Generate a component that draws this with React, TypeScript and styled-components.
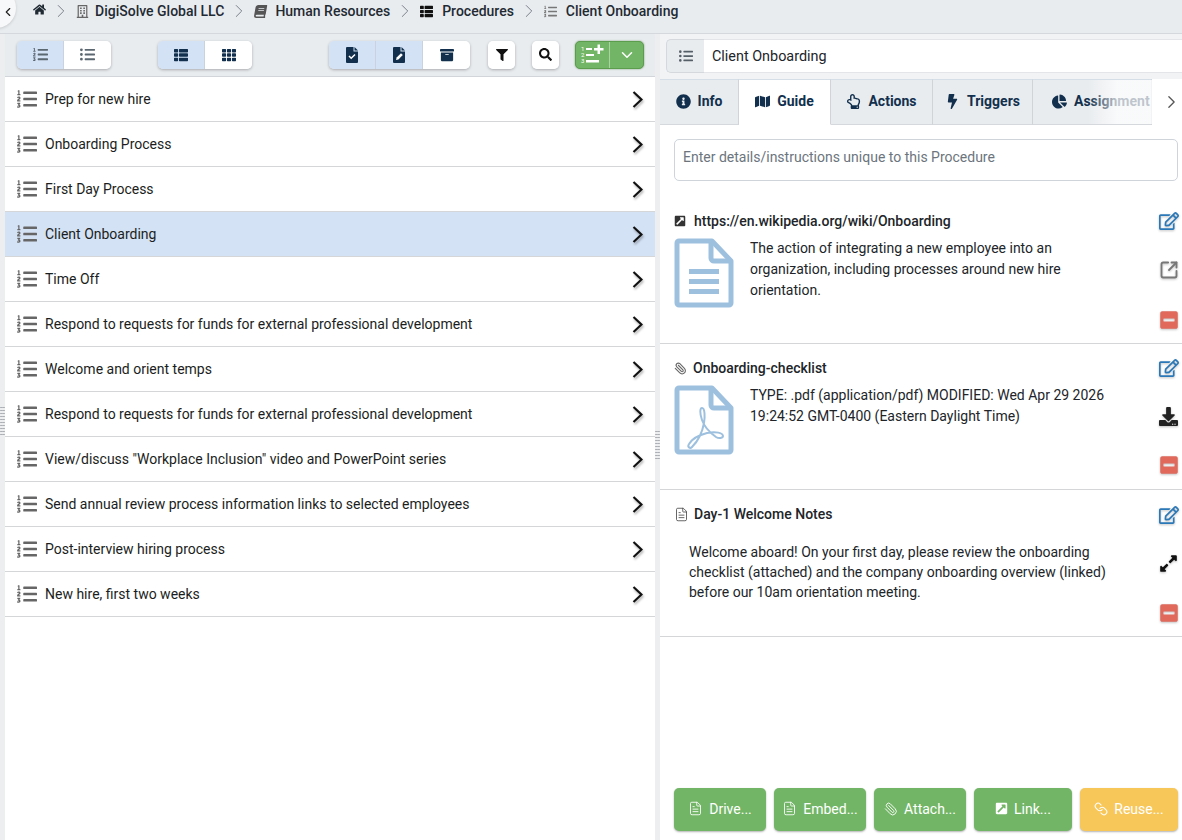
import React from 'react'
import styled, { createGlobalStyle } from 'styled-components'
import {
  FaArchive,
  FaBolt,
  FaBook,
  FaChartPie,
  FaDownload,
  FaExpandAlt,
  FaExternalLinkSquareAlt,
  FaFilter,
  FaHome,
  FaInfoCircle,
  FaListOl,
  FaListUl,
  FaMap,
  FaMinusSquare,
  FaRegBuilding,
  FaRegEdit,
  FaRegHandPointUp,
  FaSearch,
  FaTh,
  FaThList,
} from 'react-icons/fa'
import {
  ChevronDown,
  ChevronLeft,
  ChevronRight,
  FileText,
  Link as LinkIcon,
  Paperclip,
  SquareArrowOutUpRight,
} from 'lucide-react'

const GlobalStyle = createGlobalStyle`
  html, body {
    margin: 0;
    padding: 0;
    height: 100%;
    overflow: hidden;
    background: #fff;
    font-family: Roboto, "Liberation Sans", sans-serif;
    color: #212529;
  }
  * { box-sizing: border-box; }
`

const Page = styled.div`
  height: 100vh;
  display: flex;
  flex-direction: column;
`

const Breadcrumbs = styled.nav`
  position: relative;
  height: 34px;
  flex: none;
  display: flex;
  align-items: flex-start;
  padding: 3px 0 0 33px;
  background: #e9ecef;
  border-bottom: 1px solid #d5d9dd;
  font-size: 14px;
  font-weight: 500;
  line-height: 16px;
  overflow: hidden;
`

const BackButton = styled.div`
  position: absolute;
  left: -24px;
  top: -12px;
  width: 40px;
  height: 40px;
  padding: 17px 0 0 25px;
  border-radius: 50%;
  background: #f7f8f9;
  box-shadow: 0 1px 3px rgba(0, 0, 0, 0.15);
  color: #222;
  svg { display: block; width: 14px; height: 14px; }
`

const Crumb = styled.span<{ $iconGap?: number }>`
  display: inline-flex;
  align-items: center;
  gap: ${(p) => p.$iconGap ?? 8}px;
  white-space: nowrap;
  color: #1f2a33;
  svg { flex: none; font-size: 13px; }
`

const CrumbSep = styled(ChevronRight)`
  flex: none;
  width: 22px;
  height: 22px;
  margin: -3px 4px 0;
  color: #6f7780;
  stroke-width: 1;
`

const SlantedBook = styled(FaBook)`
  color: #555;
  transform: skewX(-10deg);
`

const Panes = styled.div`
  flex: 1;
  min-height: 0;
  display: flex;
  padding-left: 5px;
  background: #eceef0;
`

const LeftPane = styled.section`
  position: relative;
  width: 650px;
  flex: none;
  display: flex;
  flex-direction: column;
`

const Toolbar = styled.div`
  height: 43px;
  flex: none;
  display: flex;
  align-items: center;
  padding: 0 0 1px 12px;
  background: #e9ecef;
  border-bottom: 1px solid #d2d6da;
`

const ToolGroup = styled.div<{ $left?: number }>`
  display: flex;
  height: 28px;
  margin-left: ${(p) => p.$left ?? 0}px;
  border-radius: 5px;
  overflow: hidden;
  box-shadow: 0 1px 3px rgba(0, 0, 0, 0.28);
`

const ToolButton = styled.button<{ $active?: boolean; $width?: number }>`
  width: ${(p) => p.$width ?? 47}px;
  height: 28px;
  padding: 0;
  display: flex;
  align-items: center;
  justify-content: center;
  border: 0;
  border-right: 1px solid #c9d3de;
  background: ${(p) => (p.$active ? '#d3e2f5' : '#fff')};
  color: #12304d;
  font-size: 14px;
  &:last-child { border-right: 0; }
`

const GreyTool = styled(ToolButton)`
  color: #5b6770;
  font-size: 15px;
`

const AddGroup = styled.div`
  display: flex;
  width: 69px;
  height: 28px;
  margin-left: 16px;
  border: 1px solid #5c9c4d;
  border-radius: 5px;
  background: #72b566;
  color: #fff;
  box-shadow: 0 0 2px rgba(60, 120, 50, 0.7);
`

const AddPart = styled.div<{ $width: number; $divided?: boolean }>`
  width: ${(p) => p.$width}px;
  display: flex;
  align-items: center;
  justify-content: center;
  border-right: ${(p) => (p.$divided ? '1px solid #a9d3a1' : '0')};
  svg { display: block; }
`

const List = styled.div`
  flex: 1;
  background: #fff;
`

const Row = styled.div<{ $selected?: boolean }>`
  height: 45px;
  display: flex;
  align-items: center;
  padding: 0 12px 0 12px;
  border-bottom: 1px solid #d4d6d8;
  background: ${(p) => (p.$selected ? '#d4e2f5' : '#fff')};
  font-size: 14px;
  color: #1b1e21;
`

const RowIcon = styled(FaListOl)`
  flex: none;
  width: 20px;
  height: 20px;
  margin-right: 8px;
  color: #666;
`

const RowLabel = styled.span`
  flex: 1;
  white-space: nowrap;
`

const RowChevronSvg = styled.svg`
  flex: none;
  width: 11px;
  height: 17px;
  fill: none;
  stroke: #111;
  stroke-width: 2.2;
  filter: drop-shadow(1px 2px 1px rgba(0, 0, 0, 0.3));
`

const Grip = styled.div<{ $top: number; $left: number }>`
  position: absolute;
  top: ${(p) => p.$top}px;
  left: ${(p) => p.$left}px;
  width: 5px;
  height: 30px;
  background-image: radial-gradient(circle, #a9adb1 0.8px, transparent 1px);
  background-size: 2.5px 3px;
`

const RightPane = styled.section`
  flex: 1;
  min-width: 0;
  margin-left: 5px;
  display: flex;
  flex-direction: column;
  background: #fff;
  position: relative;
`

const NameBar = styled.div`
  height: 45px;
  flex: none;
  display: flex;
  padding: 5px 0 6px 6px;
  background: #f2f3f5;
`

const NameAddon = styled.div`
  width: 38px;
  display: flex;
  align-items: center;
  justify-content: center;
  background: #e9ecef;
  border: 1px solid #d5d9dd;
  border-right: 0;
  border-radius: 5px 0 0 5px;
  color: #555f68;
  font-size: 14px;
`

const NameInput = styled.div`
  flex: 1;
  display: flex;
  align-items: center;
  padding-left: 8px;
  background: #fff;
  border-top: 1px solid #e3e5e8;
  border-bottom: 1px solid #e3e5e8;
  font-size: 14.4px;
  color: #212529;
`

const TabBar = styled.div`
  position: relative;
  height: 46px;
  flex: none;
  display: flex;
  background: #fff;
`

const Tab = styled.div<{ $active?: boolean; $width: number; $clipped?: boolean }>`
  width: ${(p) => p.$width}px;
  flex: none;
  display: flex;
  align-items: center;
  justify-content: ${(p) => (p.$clipped ? 'flex-start' : 'center')};
  gap: 7px;
  padding: 0 0 2px ${(p) => (p.$clipped ? 19 : 0)}px;
  background: ${(p) => (p.$active ? '#fff' : '#e9ecef')};
  border-top: 1px solid #d5dde6;
  border-bottom: 1px solid ${(p) => (p.$active ? '#fff' : '#d5d9dd')};
  border-right: 1px solid #d0d4d8;
  color: #12304d;
  font-size: 14px;
  font-weight: 700;
  white-space: nowrap;
  overflow: hidden;
  svg { flex: none; font-size: 15px; }
`

const TabOverflow = styled.div`
  position: absolute;
  left: 428px;
  top: 1px;
  width: 64px;
  height: 44px;
  background: linear-gradient(
    to right,
    rgba(255, 255, 255, 0),
    rgba(255, 255, 255, 0.72) 45%,
    rgba(255, 255, 255, 0.72)
  );
`

const TabNext = styled(ChevronRight)`
  margin: 12px 0 0 9px;
  width: 22px;
  height: 22px;
  color: #555;
  stroke-width: 1.5;
`

const Details = styled.div`
  flex: none;
  height: 42px;
  margin: 14px 4px 0 14px;
  padding: 9px 8px 0;
  border: 1px solid #ced4da;
  border-radius: 5px;
  font-size: 14px;
  line-height: 16px;
  color: #6c757d;
`

const Item = styled.article<{ $height: number }>`
  height: ${(p) => p.$height}px;
  flex: none;
  position: relative;
  display: flex;
  padding: 0 4px 0 14px;
  border-bottom: 1px solid #d4d6d8;
`

const ItemMain = styled.div`
  flex: 1;
  min-width: 0;
`

const ItemTitle = styled.h3<{ $gap: number; $top: number }>`
  display: flex;
  align-items: center;
  gap: ${(p) => p.$gap}px;
  height: 18px;
  margin: ${(p) => p.$top}px 0 0;
  font-size: 14px;
  font-weight: 500;
  color: #212529;
  white-space: nowrap;
  svg { flex: none; }
`

const ItemBody = styled.div`
  display: flex;
  gap: 16px;
  margin-top: 8px;
`

const ItemText = styled.p<{ $indent?: number; $top?: number; $width: number; $line?: number }>`
  width: ${(p) => p.$width}px;
  margin: ${(p) => p.$top ?? 0}px 0 0 ${(p) => p.$indent ?? 0}px;
  font-size: 14px;
  line-height: ${(p) => p.$line ?? 21}px;
  color: #212529;
`

const ItemActions = styled.div<{ $top: number; $gap: number }>`
  width: 21px;
  flex: none;
  display: flex;
  flex-direction: column;
  align-items: center;
  gap: ${(p) => p.$gap}px;
  padding-top: ${(p) => p.$top}px;
  margin-right: -1px;
  svg { display: block; filter: drop-shadow(0 1px 1px rgba(0, 0, 0, 0.25)); }
`

const EditIcon = styled(FaRegEdit)`
  width: 20px;
  height: 18px;
  color: #2a78b8;
`

const RemoveIcon = styled(FaMinusSquare)`
  width: 18px;
  height: 20px;
  color: #e0695c;
`

const OpenIcon = styled(SquareArrowOutUpRight)`
  width: 20px;
  height: 20px;
  color: #777;
  stroke-width: 2.2;
`

const ClipIcon = styled(Paperclip)`
  transform: scaleX(-1);
`

const ChainIcon = styled(LinkIcon)`
  transform: scaleX(-1);
`

const DocSvg = styled.svg`
  flex: none;
  width: 60px;
  height: 70px;
`

const Footer = styled.footer`
  margin-top: auto;
  flex: none;
  display: flex;
  gap: 8px;
  padding: 0 4px 9px 14px;
`

const FooterButton = styled.button<{ $width: number; $tone?: 'green' | 'yellow' }>`
  width: ${(p) => p.$width}px;
  height: 43px;
  padding: 0 0 2px;
  display: flex;
  align-items: center;
  justify-content: center;
  gap: 6px;
  border: 0;
  border-radius: 5px;
  background: ${(p) => (p.$tone === 'yellow' ? '#f7c75a' : '#72b566')};
  box-shadow: 0 1px 2px rgba(0, 0, 0, 0.3);
  color: #fff;
  font-family: inherit;
  font-size: 14px;
  svg { flex: none; font-size: 13px; }
`

const RowChevron = () => (
  <RowChevronSvg viewBox="0 0 11 17">
    <path d="M1.500 1l8 7.500-8 7.500" />
  </RowChevronSvg>
)

const DocGlyph = ({ pdf }: { pdf?: boolean }) => (
  <DocSvg viewBox="0 0 60 70">
    <path
      d="M3 5a2 2 0 0 1 2-2h33l19 20v42a2 2 0 0 1-2 2H5a2 2 0 0 1-2-2z"
      fill="none"
      stroke="#9dc0df"
      strokeWidth="5"
      strokeLinejoin="round"
    />
    <path d="M37 3v17a3 3 0 0 0 3 3h17" fill="none" stroke="#9dc0df" strokeWidth="5" />
    {pdf ? (
      <path
        d="M28 23c-2 0-2.500 5 0 12 2 6 7 12 14 17 3 2 7 1 7-1 0-3-7-5-16-3-8 2-15 6-18 11-2 3 1 5 3 3 5-5 10-13 12-24 1-6 1-15-2-15z"
        fill="none"
        stroke="#9dc0df"
        strokeWidth="2"
      />
    ) : (
      <g fill="#9dc0df">
        <rect x="15" y="31" width="30" height="5" />
        <rect x="15" y="41" width="30" height="5" />
        <rect x="15" y="51" width="30" height="5" />
      </g>
    )}
  </DocSvg>
)

const FileTool = ({ mark }: { mark: 'check' | 'pencil' }) => (
  <svg width="12" height="16" viewBox="0 0 12 16">
    <path d="M0 1a1 1 0 0 1 1-1h6.500v4.500H12V15a1 1 0 0 1-1 1H1a1 1 0 0 1-1-1z" fill="#12304d" />
    <path d="M8.500 0L12 3.500H8.500z" fill="#12304d" />
    {mark === 'check' ? (
      <path d="M3 9l2.200 2.200L9 7.500" fill="none" stroke="#fff" strokeWidth="1.500" />
    ) : (
      <path d="M3 13l.6-2.400L8 6.200l1.800 1.800-4.400 4.400z" fill="#fff" />
    )}
  </svg>
)

const AddListIcon = () => (
  <svg width="23" height="21" viewBox="0 0 23 21" fill="#fff">
    <text x="0" y="7" fontSize="6" fontFamily="Roboto, sans-serif">1</text>
    <text x="0" y="13" fontSize="6" fontFamily="Roboto, sans-serif">2</text>
    <text x="0" y="19" fontSize="6" fontFamily="Roboto, sans-serif">3</text>
    <rect x="5" y="4" width="6" height="2" />
    <rect x="5" y="10" width="8" height="2" />
    <rect x="5" y="16" width="13" height="2.500" />
    <path d="M13 4h3.500V.5H19V4h3.500v2.500H19V10h-2.500V6.500H13z" />
  </svg>
)

const procedures = [
  'Prep for new hire',
  'Onboarding Process',
  'First Day Process',
  'Client Onboarding',
  'Time Off',
  'Respond to requests for funds for external professional development',
  'Welcome and orient temps',
  'Respond to requests for funds for external professional development',
  'View/discuss "Workplace Inclusion" video and PowerPoint series',
  'Send annual review process information links to selected employees',
  'Post-interview hiring process',
  'New hire, first two weeks',
]

export default function App() {
  return (
    <Page>
      <GlobalStyle />
      <Breadcrumbs>
        <BackButton>
          <ChevronLeft />
        </BackButton>
        <Crumb>
          <FaHome />
        </Crumb>
        <CrumbSep />
        <Crumb $iconGap={6}>
          <FaRegBuilding color="#666" />
          DigiSolve Global LLC
        </Crumb>
        <CrumbSep />
        <Crumb $iconGap={8}>
          <SlantedBook />
          Human Resources
        </Crumb>
        <CrumbSep />
        <Crumb $iconGap={9}>
          <FaThList color="#111" />
          Procedures
        </Crumb>
        <CrumbSep />
        <Crumb $iconGap={9}>
          <FaListOl color="#777" />
          Client Onboarding
        </Crumb>
      </Breadcrumbs>
      <Panes>
        <LeftPane>
          <Toolbar>
            <ToolGroup>
              <GreyTool $active>
                <FaListOl />
              </GreyTool>
              <GreyTool>
                <FaListUl />
              </GreyTool>
            </ToolGroup>
            <ToolGroup $left={47}>
              <ToolButton $active>
                <FaThList />
              </ToolButton>
              <ToolButton>
                <FaTh />
              </ToolButton>
            </ToolGroup>
            <ToolGroup $left={77}>
              <ToolButton $active>
                <FileTool mark="check" />
              </ToolButton>
              <ToolButton $active>
                <FileTool mark="pencil" />
              </ToolButton>
              <ToolButton>
                <FaArchive />
              </ToolButton>
            </ToolGroup>
            <ToolGroup $left={18}>
              <ToolButton $width={27}>
                <FaFilter size={12} color="#111" />
              </ToolButton>
            </ToolGroup>
            <ToolGroup $left={17}>
              <ToolButton $width={27}>
                <FaSearch size={13} color="#111" />
              </ToolButton>
            </ToolGroup>
            <AddGroup>
              <AddPart $width={34} $divided>
                <AddListIcon />
              </AddPart>
              <AddPart $width={33}>
                <ChevronDown size={18} />
              </AddPart>
            </AddGroup>
          </Toolbar>
          <List>
            {procedures.map((name, i) => (
              <Row key={i} $selected={name === 'Client Onboarding'}>
                <RowIcon />
                <RowLabel>{name}</RowLabel>
                <RowChevron />
              </Row>
            ))}
          </List>
          <Grip $top={372} $left={-5} />
          <Grip $top={396} $left={650} />
        </LeftPane>
        <RightPane>
          <NameBar>
            <NameAddon>
              <FaListUl />
            </NameAddon>
            <NameInput>Client Onboarding</NameInput>
          </NameBar>
          <TabBar>
            <Tab $width={79}>
              <FaInfoCircle />
              Info
            </Tab>
            <Tab $active $width={92}>
              <FaMap />
              Guide
            </Tab>
            <Tab $width={102}>
              <FaRegHandPointUp />
              Actions
            </Tab>
            <Tab $width={100}>
              <FaBolt />
              Triggers
            </Tab>
            <Tab $width={119} $clipped>
              <FaChartPie />
              Assignment
            </Tab>
            <TabOverflow />
            <TabNext />
          </TabBar>
          <Details>Enter details/instructions unique to this Procedure</Details>
          <Item $height={163}>
            <ItemMain>
              <ItemTitle $gap={8} $top={31}>
                <FaExternalLinkSquareAlt size={12} color="#333" />
                https://en.wikipedia.org/wiki/Onboarding
              </ItemTitle>
              <ItemBody>
                <DocGlyph />
                <ItemText $width={330}>
                  The action of integrating a new employee into an organization, including
                  processes around new hire orientation.
                </ItemText>
              </ItemBody>
            </ItemMain>
            <ItemActions $top={31} $gap={30}>
              <EditIcon />
              <OpenIcon />
              <RemoveIcon />
            </ItemActions>
          </Item>
          <Item $height={146}>
            <ItemMain>
              <ItemTitle $gap={6} $top={15}>
                <ClipIcon size={13} color="#666" />
                Onboarding-checklist
              </ItemTitle>
              <ItemBody>
                <DocGlyph pdf />
                <ItemText $width={365}>
                  TYPE: .pdf (application/pdf) MODIFIED: Wed Apr 29 2026 19:24:52 GMT-0400
                  (Eastern Daylight Time)
                </ItemText>
              </ItemBody>
            </ItemMain>
            <ItemActions $top={15} $gap={29.5}>
              <EditIcon />
              <FaDownload size={19} color="#222" />
              <RemoveIcon />
            </ItemActions>
          </Item>
          <Item $height={147}>
            <ItemMain>
              <ItemTitle $gap={5} $top={15}>
                <FileText size={15} color="#444" strokeWidth={1.3} />
                Day-1 Welcome Notes
              </ItemTitle>
              <ItemText $indent={15} $top={19} $width={430} $line={20}>
                Welcome aboard! On your first day, please review the onboarding checklist
                (attached) and the company onboarding overview (linked) before our 10am
                orientation meeting.
              </ItemText>
            </ItemMain>
            <ItemActions $top={16} $gap={30}>
              <EditIcon />
              <FaExpandAlt size={19} color="#111" />
              <RemoveIcon />
            </ItemActions>
          </Item>
          <Footer>
            <FooterButton $width={92}>
              <FileText size={15} strokeWidth={1.4} />
              Drive...
            </FooterButton>
            <FooterButton $width={92}>
              <FileText size={15} strokeWidth={1.4} />
              Embed...
            </FooterButton>
            <FooterButton $width={92}>
              <ClipIcon size={14} strokeWidth={1.6} />
              Attach...
            </FooterButton>
            <FooterButton $width={98}>
              <FaExternalLinkSquareAlt />
              Link...
            </FooterButton>
            <FooterButton $width={98} $tone="yellow">
              <ChainIcon size={14} strokeWidth={1.8} />
              Reuse...
            </FooterButton>
          </Footer>
        </RightPane>
      </Panes>
    </Page>
  )
}
